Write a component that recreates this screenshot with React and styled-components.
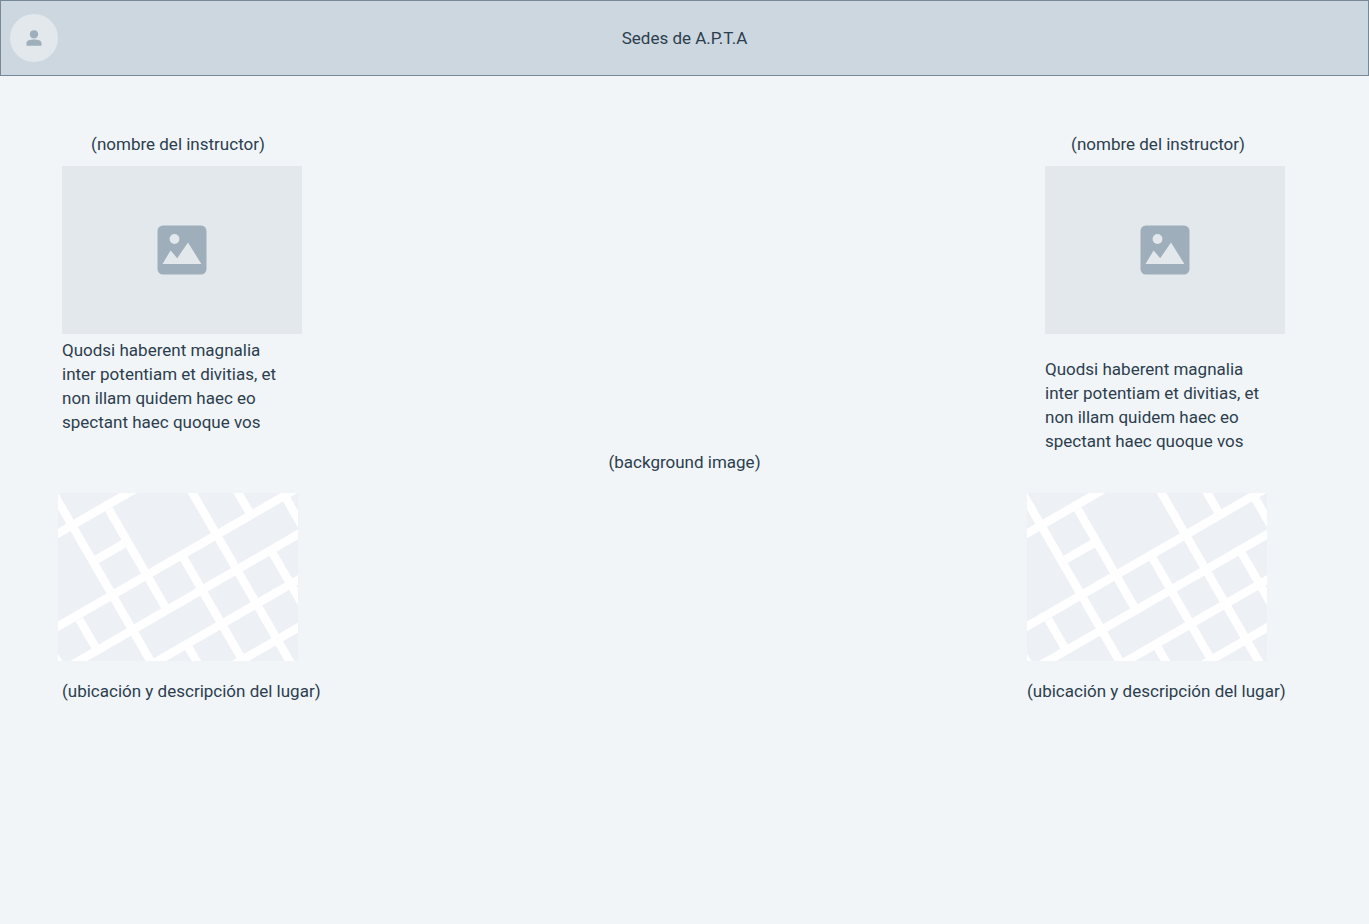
import React from "react";
import styled, { createGlobalStyle } from "styled-components";

const GlobalStyle = createGlobalStyle`
  *, *::before, *::after { box-sizing: border-box; }
  body {
    margin: 0;
    background: #f1f5f8;
    color: #2c3e4e;
    font-family: Roboto, "Liberation Sans", sans-serif;
    font-size: 17px;
    line-height: 24px;
  }
`;

const Page = styled.div`
  display: flex;
  flex-direction: column;
  min-height: 100vh;
`;

const Header = styled.header`
  display: grid;
  grid-template-columns: 48px 1fr 48px;
  align-items: center;
  height: 76px;
  padding: 0 9px;
  background: #cdd7e0;
  border: 1px solid #778899;
`;

const Title = styled.h1`
  margin: 0;
  font-size: 17px;
  font-weight: 400;
  text-align: center;
`;

const AvatarButton = styled.button`
  width: 48px;
  height: 48px;
  padding: 0;
  border: 0;
  border-radius: 50%;
  background: #e2e8ec;
  cursor: pointer;

  svg { display: block; }
`;

const Main = styled.main`
  flex: 1;
  display: grid;
  grid-template-columns: 342px 1fr 342px;
  padding-bottom: 76px;
`;

const Site = styled.section`
  display: flex;
  flex-direction: column;
  align-items: flex-start;
  padding-top: 56px;
  padding-left: ${(p) => (p.$end ? 0 : 58)}px;
`;

const Name = styled.h2`
  width: ${(p) => (p.$end ? 262 : 240)}px;
  margin: 0 0 10px;
  font-size: 17px;
  font-weight: 400;
  text-align: center;
`;

const Photo = styled.div`
  display: flex;
  align-items: center;
  justify-content: center;
  width: 240px;
  height: 168px;
  margin-left: ${(p) => (p.$end ? 18 : 4)}px;
  background: #e2e8ec;
`;

const Bio = styled.p`
  width: 232px;
  min-height: 159px;
  margin: 0 0 0 ${(p) => (p.$end ? 18 : 4)}px;
  padding-top: ${(p) => (p.$end ? 23 : 4)}px;
`;

const MapDrawing = styled.svg`
  display: block;
  width: 240px;
  height: 168px;
  background: #edf0f5;
`;

const Caption = styled.p`
  margin: 18px 0 0 ${(p) => (p.$end ? 0 : 4)}px;
  white-space: nowrap;
`;

const BackgroundLabel = styled.p`
  place-self: center;
  margin: 0;
`;

const UserIcon = () => (
  <svg width="48" height="48" viewBox="0 0 48 48" fill="#9eaebb" aria-hidden="true">
    <circle cx="24" cy="20.3" r="4.1" />
    <path d="M16.5 29.2c0-2.5 3.6-3.6 7.5-3.6s7.5 1.1 7.5 3.6v2a.6.6 0 0 1-.6.6H17.100a.6.6 0 0 1-.6-.6z" />
  </svg>
);

const ImageIcon = () => (
  <svg width="50" height="50" viewBox="0 0 50 50" aria-hidden="true">
    <rect x="0.5" y="0.5" width="49" height="49" rx="5.5" fill="#9eaebb" />
    <circle cx="17.5" cy="14" r="4.9" fill="#e2e8ec" />
    <path d="M5.5 39l8.1-13.6 6.6 7.8L31 17.5l13.4 21.5z" fill="#e2e8ec" />
  </svg>
);

const StreetMap = () => (
  <MapDrawing viewBox="0 0 240 168" role="img" aria-label="Mapa">
    <g stroke="#fff" strokeWidth="8.4" fill="none">
      <path d="M-10 46.3L80-5.7M-10 139.2L250-10.9M-10 185.8L250 35.7M-10 231.3L250 81.2M-10 279L250 128.9" />
      <path d="M38.7 66.3L67 50" />
      <path d="M-10.4-10L98.2 178M50.8 16.3L107 113.7M128.7-10L237.3 178M125.3 64.6L184 166.3" />
      <path d="M174.5-10L191.5 19.5M228 5.2L250 43.3M214.6 60L250 121.2M21.3 126.3L38.5 156M130.5 154.3L144.2 178M-10 151.7L5.2 178" />
    </g>
  </MapDrawing>
);

const TrainingSite = ({ end = false }) => (
  <Site $end={end}>
    <Name $end={end}>(nombre del instructor)</Name>
    <Photo $end={end}>
      <ImageIcon />
    </Photo>
    <Bio $end={end}>
      Quodsi haberent magnalia inter potentiam et divitias, et non illam quidem
      haec eo spectant haec quoque vos
    </Bio>
    <StreetMap />
    <Caption $end={end}>(ubicación y descripción del lugar)</Caption>
  </Site>
);

export default function App() {
  return (
    <>
      <GlobalStyle />
      <Page>
        <Header>
          <AvatarButton type="button" aria-label="Perfil">
            <UserIcon />
          </AvatarButton>
          <Title>Sedes de A.P.T.A</Title>
        </Header>
        <Main>
          <TrainingSite />
          <BackgroundLabel>(background image)</BackgroundLabel>
          <TrainingSite end />
        </Main>
      </Page>
    </>
  );
}
